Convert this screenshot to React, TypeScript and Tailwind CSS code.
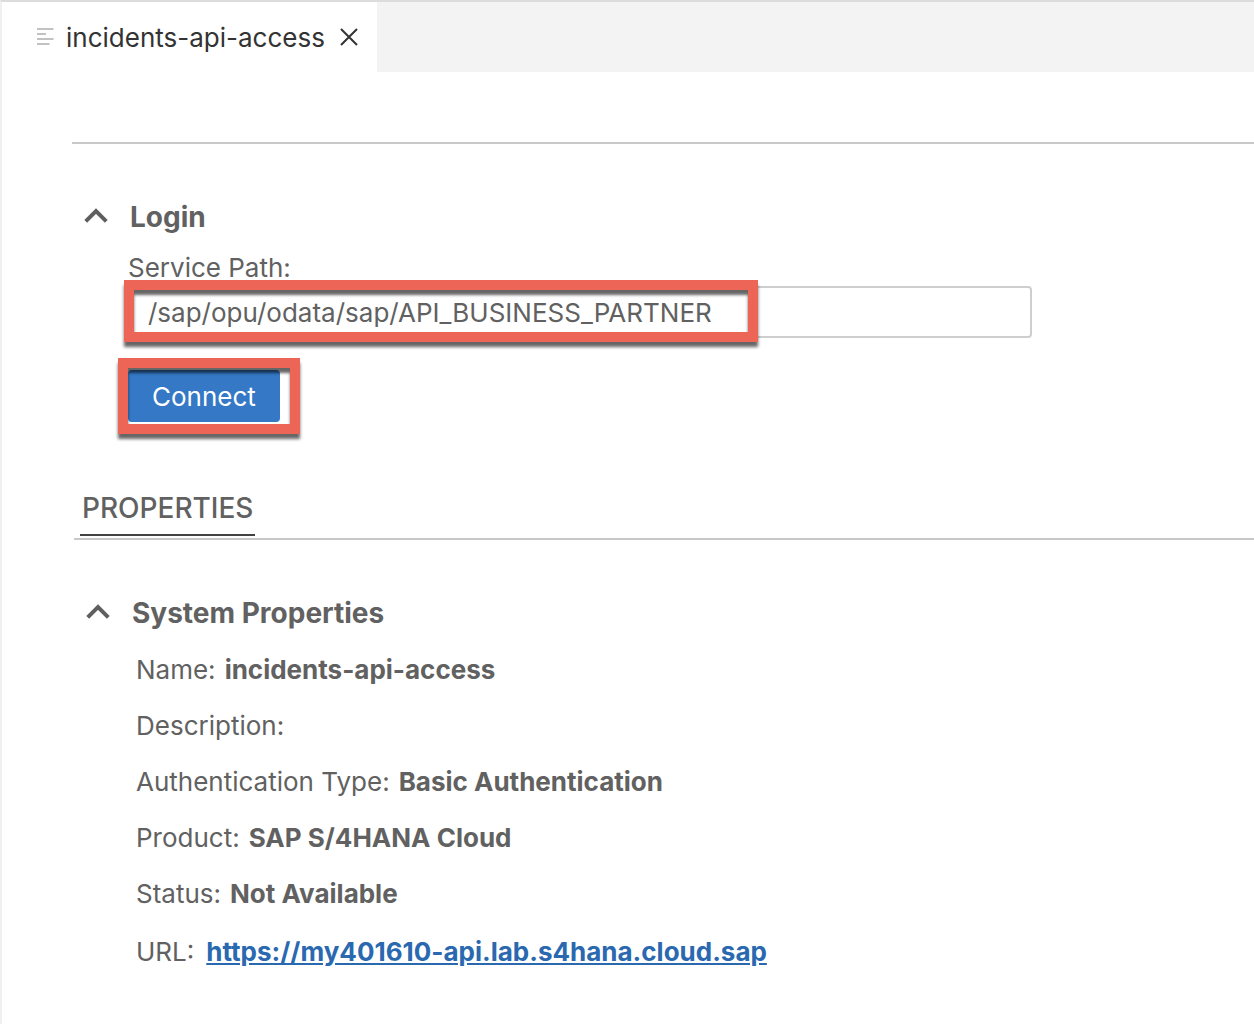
import React from "react";

const properties = [
  { label: "Name:", value: "incidents-api-access" },
  { label: "Description:", value: "" },
  { label: "Authentication Type:", value: "Basic Authentication" },
  { label: "Product:", value: "SAP S/4HANA Cloud" },
  { label: "Status:", value: "Not Available" },
];

function Chevron() {
  return (
    <svg className="h-6 w-6 shrink-0" viewBox="0 0 24 24" fill="none" stroke="#5f5f5f" strokeWidth="4" aria-hidden="true">
      <path d="M1.700 16.400 12 6.100l10.300 10.300" />
    </svg>
  );
}

function Callout() {
  return (
    <span
      aria-hidden="true"
      className="pointer-events-none absolute inset-0 border-10 border-[#ed6556] shadow-[0_5px_3px_rgba(0,0,0,0.6),inset_0_5px_3px_rgba(0,0,0,0.6)]"
    />
  );
}

export default function App() {
  return (
    <div className="min-h-screen overflow-x-hidden border-l-2 border-t-2 border-l-[#f0f0f0] border-t-[#dcdcdc] bg-white font-['Inter',sans-serif] text-[26px] leading-8 text-[#616161]">
      <header className="flex h-[70px] bg-[#f3f3f3]">
        <div className="flex items-center bg-white pl-[35px] pr-[18px] text-[#333333]">
          <svg className="h-5 w-[18px]" viewBox="0 0 18 20" fill="none" stroke="#c2c2c2" strokeWidth="2" aria-hidden="true">
            <path d="M0 2h16.500M0 7h9M0 12h16.500M0 17h12.500" />
          </svg>
          <span className="ml-[11px] pt-[2px]">incidents-api-access</span>
          <button type="button" aria-label="Close tab" className="ml-[14px]">
            <svg className="h-5 w-5" viewBox="0 0 20 20" fill="none" stroke="#333" strokeWidth="2">
              <path d="m2 2 16 16M18 2 2 18" />
            </svg>
          </button>
        </div>
      </header>
      <main className="pl-[70px]">
        <section className="mt-[70px] border-t-2 border-[#c8c8c8] pt-[57px]">
          <h2 className="text-[28px] font-bold">
            <button type="button" className="flex items-center pl-3">
              <Chevron />
              <span className="ml-[22px]">Login</span>
            </button>
          </h2>
          <div className="pl-[56px] pt-[19px]">
            <label htmlFor="service-path" className="block">Service Path:</label>
            <div className="relative mt-[2px] w-[904px] max-w-full">
              <input
                id="service-path"
                defaultValue="/sap/opu/odata/sap/API_BUSINESS_PARTNER"
                className="block h-[52px] w-full rounded border-2 border-[#cecece] px-[18px] outline-none"
              />
              <div className="absolute -left-1 -top-[6px] h-[62px] w-[634px]"><Callout /></div>
            </div>
            <div className="relative mt-8 w-fit">
              <button type="button" className="block h-[52px] rounded bg-[#3478c6] px-6 pt-[2px] text-white">Connect</button>
              <div className="absolute -left-[10px] -top-3 h-[76px] w-[182px]"><Callout /></div>
            </div>
          </div>
        </section>
        <section className="ml-[2px] mt-[68px]">
          <div className="flex border-b-2 border-[#c8c8c8] pb-[2px] pl-[6px]">
            <h2 className="h-[46px] border-b-2 border-[#424242] px-[2px] text-[28px] font-medium leading-9">PROPERTIES</h2>
          </div>
          <h2 className="mt-[57px] text-[28px] font-bold">
            <button type="button" className="flex items-center pl-3">
              <Chevron />
              <span className="ml-[22px]">System Properties</span>
            </button>
          </h2>
          <dl className="mt-[25px] grid gap-6 pl-[62px]">
            {properties.map((item) => (
              <div key={item.label} className="flex gap-[9px]">
                <dt>{item.label}</dt>
                <dd className="font-bold">{item.value}</dd>
              </div>
            ))}
            <div className="flex gap-3 pt-[2px]">
              <dt>URL:</dt>
              <dd className="font-bold">
                <a href="https://my401610-api.lab.s4hana.cloud.sap" className="text-[#2a69b0] underline">https://my401610-api.lab.s4hana.cloud.sap</a>
              </dd>
            </div>
          </dl>
        </section>
      </main>
    </div>
  );
}
